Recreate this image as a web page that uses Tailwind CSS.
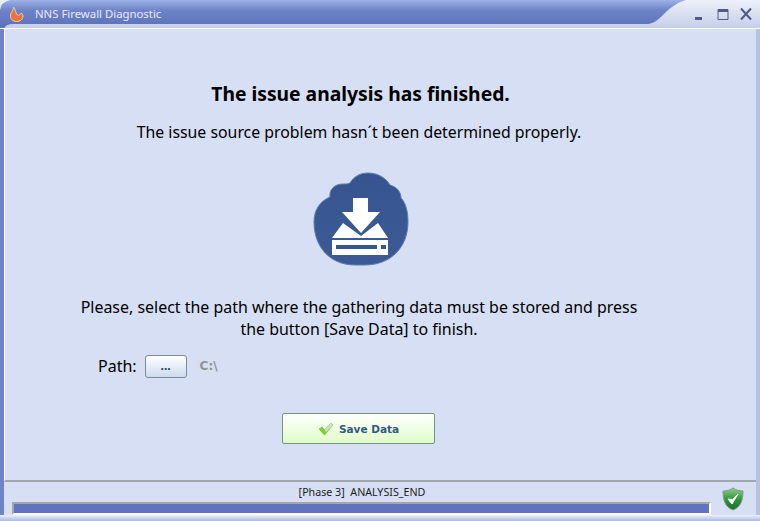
<!DOCTYPE html>
<html lang="en">
<head>
    <meta charset="UTF-8">
    <title>NNS Firewall Diagnostic</title>
    <script src="https://cdn.jsdelivr.net/npm/@tailwindcss/browser@4"></script>
</head>
<body class="w-[760px] h-[521px] overflow-hidden bg-[#d6dff3] font-['Noto_Sans',sans-serif] text-black">
    <div class="w-[760px] h-[521px] flex flex-col">

        <!-- title bar -->
        <header class="relative h-[29px] shrink-0 flex items-center">
            <svg class="absolute inset-0" width="760" height="29" viewBox="0 0 760 29">
                <defs>
                    <linearGradient id="bar" x1="0" y1="0" x2="0" y2="1">
                        <stop offset="0" stop-color="#9db2e6"/>
                        <stop offset="0.35" stop-color="#6f84c8"/>
                        <stop offset="1" stop-color="#5a6fb4"/>
                    </linearGradient>
                    <linearGradient id="light" x1="0" y1="0" x2="0" y2="1">
                        <stop offset="0" stop-color="#eef1fa"/>
                        <stop offset="1" stop-color="#c3cde8"/>
                    </linearGradient>
                </defs>
                <rect width="760" height="29" fill="url(#light)"/>
                <path d="M0 29V10Q1 2 10 0H686C676 3 670 8 664 14C659 19 655 23 648 24H14Q5 24 4 29Z" fill="url(#bar)"/>
                <rect y="28" width="760" height="1" fill="#ffffff"/>
            </svg>
            <svg class="relative ml-[9px] -mt-[2px]" width="15" height="16" viewBox="0 0 15 16">
                <path d="M4.500 1C5 4 2 5.500 1.500 9C1 13 4 15.500 7.500 15.500C11 15.500 14 13.500 14 10C14 8.500 13.300 7.500 12 7C11.500 9 10 9.500 8.500 9C6.500 8 7 4 4.500 1Z" fill="#e8763a" stroke="#f7c9a4" stroke-width="1"/>
            </svg>
            <span class="relative ml-[11px] -mt-[2px] text-[11.35px] text-[#e6ebf8]">NNS Firewall Diagnostic</span>
            <div class="relative ml-auto mr-[8px] -mt-[2px] flex items-center gap-[11px] text-[#515c80]">
                <svg width="12" height="14" viewBox="0 0 12 14"><rect x="1" y="10" width="7" height="3" fill="currentColor"/></svg>
                <svg width="12" height="14" viewBox="0 0 12 14"><path d="M1 2.500H11V12.500H1Z" fill="none" stroke="currentColor"/><rect x="1" y="2" width="10" height="3" fill="currentColor"/></svg>
                <svg width="12" height="14" viewBox="0 0 12 14"><path d="M1 1.500L11 12.500M11 1.500L1 12.500" fill="none" stroke="currentColor" stroke-width="2"/></svg>
            </div>
        </header>

        <!-- content -->
        <div class="flex-1 flex flex-col border-l-[4px] border-r-[4px] border-l-[#6f84c8] border-r-[#b4c2e2] min-h-0">
            <main class="flex-1 flex flex-col items-center border-l border-l-white border-b-2 border-b-[#a4a6ad] pr-[40px] pt-[53px]">
                <h1 class="text-[19.3px] leading-[24px] font-bold">The issue analysis has finished.</h1>
                <p class="mt-[15px] mr-[3px] text-[15.85px] leading-[22px]">The issue source problem hasn´t been determined properly.</p>

                <svg class="mt-[27px]" width="96" height="98" viewBox="0 0 96 98">
                    <defs>
                        <linearGradient id="cloud" x1="0" y1="0" x2="0" y2="1">
                            <stop offset="0" stop-color="#365590"/>
                            <stop offset="1" stop-color="#3d5a94"/>
                        </linearGradient>
                    </defs>
                    <path d="M1 52C1 40 7 31 17 27C16 19 22 14 30 14C33 14 35 14 37 13C41 6 48 3 55 3C65 3 73 8 77 15C84 17 88 22 88 28C93 33 95 42 95 52C95 77 78 95 52 95H42C17 95 1 77 1 52Z" fill="url(#cloud)" stroke="#5f7db5" stroke-width="1"/>
                    <path d="M40 28H55V42H67L48 63L29 42H40Z" fill="#fff"/>
                    <path d="M30 53L48 66L65 53L75 68H19Z" fill="#fff"/>
                    <path d="M19 70H75V85H19Z" fill="#fff"/>
                    <rect x="23" y="75" width="41" height="4" fill="#365590"/>
                    <rect x="68" y="75" width="5" height="4" fill="#365590"/>
                </svg>

                <p class="mt-[28px] mr-[3px] w-[640px] text-center text-[15.95px] leading-[22px]">Please, select the path where the gathering data must be stored and press<br>the button [Save Data] to finish.</p>

                <div class="mt-[14px] w-full flex items-center pl-[93px]">
                    <span class="text-[16px]">Path:</span>
                    <button class="ml-[8px] w-[42px] h-[23px] rounded-[3px] border border-[#7d8a9e] bg-gradient-to-b from-white to-[#cddaf0] text-[12px] leading-[12px] font-bold text-[#1f3a66]">...</button>
                    <span class="ml-[13px] text-[12px] font-bold text-[#8f9296] font-['DejaVu_Sans',sans-serif]">C:\</span>
                </div>

                <button class="mt-[35px] mr-[4px] w-[153px] h-[31px] flex items-center justify-center gap-[5px] rounded-[2px] border border-[#71967d] bg-gradient-to-b from-white to-[#e0fbc8] text-[10.5px] font-bold text-[#33597f] font-['DejaVu_Sans',sans-serif]">
                    <svg width="16" height="14" viewBox="0 0 16 14">
                        <path d="M1 7L4 5L6.500 8L13 1L15 3L6.500 13Z" fill="#7ccf2e" stroke="#5aa81e" stroke-width="0.500"/>
                        <path d="M6.500 8L13 1L15 3L8 10Z" fill="#c9e6c4"/>
                    </svg>
                    <span class="pt-[2px]">Save Data</span>
                </button>
            </main>

            <!-- status -->
            <footer class="relative h-[33px] shrink-0 flex flex-col">
                <p class="text-center pr-[36px] text-[10.7px] leading-[12px] pt-[4px] text-[#1d1d1d]">[Phase 3]&nbsp; ANALYSIS_END</p>
                <div class="mt-[4px] ml-[8px] w-[699px] h-[13px] border-2 border-[#a4a6ad] border-r-white border-b-white bg-[#6072c0]"></div>
                <svg class="absolute right-[12px] top-[5px]" width="22" height="24" viewBox="0 0 22 24">
                    <defs>
                        <linearGradient id="shield" x1="0" y1="0" x2="0" y2="1">
                            <stop offset="0" stop-color="#8fce86"/>
                            <stop offset="0.5" stop-color="#2f9a3c"/>
                            <stop offset="1" stop-color="#0f6f28"/>
                        </linearGradient>
                    </defs>
                    <path d="M11 1C14 3 17 4 21 4C21 13 19 20 11 23C3 20 1 13 1 4C5 4 8 3 11 1Z" fill="url(#shield)" stroke="#8c958e"/>
                    <path d="M6 12L10 17L16 7L10.500 12.500Z" fill="#fff" stroke="#fff" stroke-width="1"/>
                </svg>
            </footer>
        </div>

        <div class="h-[6px] shrink-0 bg-gradient-to-b from-[#eef1fa] to-[#a9b8de]"></div>
    </div>
</body>
</html>
